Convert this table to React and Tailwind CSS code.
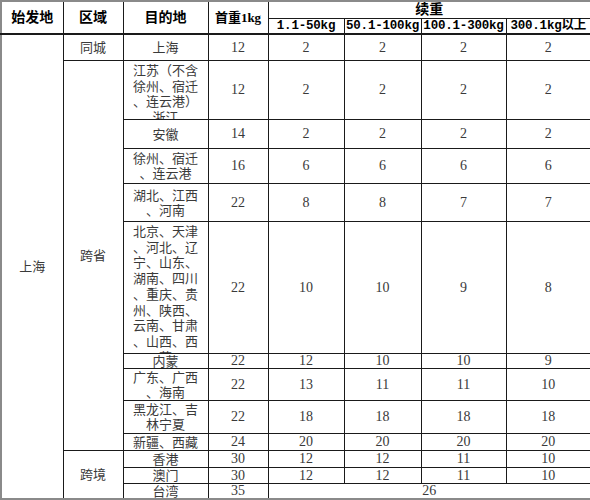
import React from "react";

const cn = "font-['Liberation_Serif','Noto_Sans_CJK_SC',serif]";
const mono = "font-['Liberation_Mono','Noto_Sans_CJK_SC',monospace]";

// 目的地 rows; h = height of the clipped destination box
const rows = [
  { h: "h-[25px]", dest: ["上海"], first: "12", rest: ["2", "2", "2", "2"] },
  {
    h: "h-[58px]",
    top: true,
    dest: ["江苏（不含", "徐州、宿迁", "、连云港）", "浙江"],
    first: "12",
    rest: ["2", "2", "2", "2"],
  },
  { h: "h-[28px]", dest: ["安徽"], first: "14", rest: ["2", "2", "2", "2"] },
  { h: "h-[34px]", dest: ["徐州、宿迁", "、连云港"], first: "16", rest: ["6", "6", "6", "6"] },
  { h: "h-[37px]", dest: ["湖北、江西", "、河南"], first: "22", rest: ["8", "8", "7", "7"] },
  {
    h: "h-[131px]",
    top: true,
    dest: [
      "北京、天津",
      "、河北、辽",
      "宁、山东、",
      "湖南、四川",
      "、重庆、贵",
      "州、陕西、",
      "云南、甘肃",
      "、山西、西",
      "藏",
    ],
    first: "22",
    rest: ["10", "10", "9", "8"],
  },
  { h: "h-[14px]", dest: ["内蒙"], first: "22", rest: ["12", "10", "10", "9"] },
  { h: "h-[31px]", dest: ["广东、广西", "、海南"], first: "22", rest: ["13", "11", "11", "10"] },
  { h: "h-[32px]", dest: ["黑龙江、吉", "林宁夏"], first: "22", rest: ["18", "18", "18", "18"] },
  { h: "h-[16px]", dest: ["新疆、西藏"], first: "24", rest: ["20", "20", "20", "20"] },
  { h: "h-[16px]", dest: ["香港"], first: "30", rest: ["12", "12", "11", "10"] },
  { h: "h-[15px]", dest: ["澳门"], first: "30", rest: ["12", "12", "11", "10"] },
  { h: "h-[14px]", dest: ["台湾"], first: "35", rest: null, all: "26" },
];

const td = "border border-[#1a1a1a] p-0 text-center align-middle";
const th = "border border-[#1a1a1a] p-0 text-center align-middle font-bold text-black";

const Dest = ({ row }) => (
  <div
    className={`${row.h} overflow-hidden flex flex-col items-center ${
      row.top ? "justify-start pt-[2px] leading-[15.7px]" : "justify-center leading-[15px]"
    }`}
  >
    {row.dest.map((line, i) => (
      <span key={i} className="whitespace-nowrap">
        {line}
      </span>
    ))}
  </div>
);

export default function App() {
  return (
    <div className="w-[590px] h-[500px] bg-white">
      <table
        className={`table-fixed border-collapse border-2 border-[#8a8a8a] w-[590px] text-[13px] text-[#3a3a3a] ${cn}`}
      >
        <colgroup>
          <col className="w-[62px]" />
          <col className="w-[60px]" />
          <col className="w-[85px]" />
          <col className="w-[60px]" />
          <col className="w-[76px]" />
          <col className="w-[77px]" />
          <col className="w-[85px]" />
          <col className="w-[85px]" />
        </colgroup>
        <thead>
          <tr className="h-[17px]">
            <th rowSpan={2} className={`${th} border-b-2 text-[14px]`}>
              始发地
            </th>
            <th rowSpan={2} className={`${th} border-b-2 text-[14px]`}>
              区域
            </th>
            <th rowSpan={2} className={`${th} border-b-2 text-[14px]`}>
              目的地
            </th>
            <th rowSpan={2} className={`${th} border-b-2 text-[13px]`}>
              首重1kg
            </th>
            <th colSpan={4} className={`${th} text-[14px] leading-[15px]`}>
              续重
            </th>
          </tr>
          <tr className="h-[16px]">
            {["1.1-50kg", "50.1-100kg", "100.1-300kg", "300.1kg以上"].map((t) => (
              <th
                key={t}
                className={`${th} border-b-2 ${mono} text-[12.5px] leading-[14px] whitespace-nowrap tracking-[-0.2px]`}
              >
                {t}
              </th>
            ))}
          </tr>
        </thead>
        <tbody>
          {rows.map((row, i) => (
            <tr key={i}>
              {i === 0 && (
                <td rowSpan={13} className={td}>
                  上海
                </td>
              )}
              {i === 0 && <td className={td}>同城</td>}
              {i === 1 && (
                <td rowSpan={9} className={td}>
                  跨省
                </td>
              )}
              {i === 10 && (
                <td rowSpan={3} className={td}>
                  跨境
                </td>
              )}
              <td className={td}>
                <Dest row={row} />
              </td>
              <td className={`${td} text-[14px] leading-[14px]`}>{row.first}</td>
              {row.rest ? (
                row.rest.map((v, j) => (
                  <td key={j} className={`${td} text-[14px] leading-[14px]`}>
                    {v}
                  </td>
                ))
              ) : (
                <td colSpan={4} className={`${td} text-[14px] leading-[14px]`}>
                  {row.all}
                </td>
              )}
            </tr>
          ))}
        </tbody>
      </table>
    </div>
  );
}
